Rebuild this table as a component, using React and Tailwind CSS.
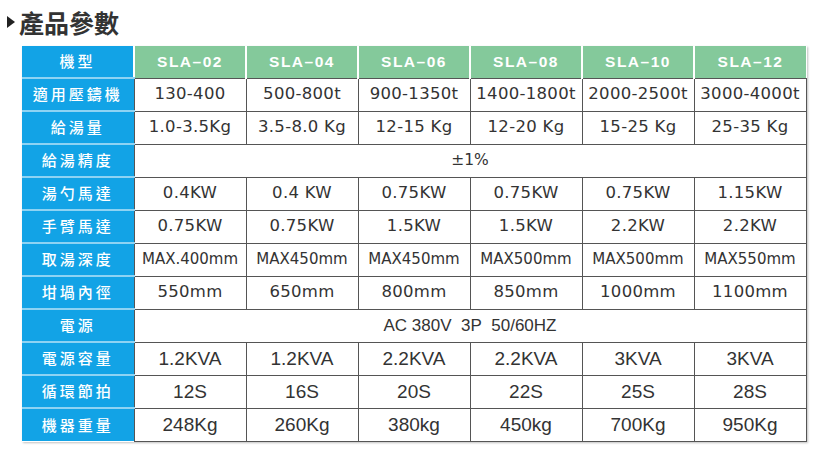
const MODELS = ["SLA-02", "SLA-04", "SLA-06", "SLA-08", "SLA-10", "SLA-12"]

// third field: text style for the row ("small" = narrow MAX row, "arial" = lower rows set in Arial-like type)
const ROWS = [
  ["適用壓鑄機", ["130-400", "500-800t", "900-1350t", "1400-1800t", "2000-2500t", "3000-4000t"]],
  ["給湯量", ["1.0-3.5Kg", "3.5-8.0 Kg", "12-15 Kg", "12-20 Kg", "15-25 Kg", "25-35 Kg"]],
  ["給湯精度", "±1%"],
  ["湯勺馬達", ["0.4KW", "0.4 KW", "0.75KW", "0.75KW", "0.75KW", "1.15KW"]],
  ["手臂馬達", ["0.75KW", "0.75KW", "1.5KW", "1.5KW", "2.2KW", "2.2KW"]],
  ["取湯深度", ["MAX.400mm", "MAX450mm", "MAX450mm", "MAX500mm", "MAX500mm", "MAX550mm"], "small"],
  ["坩堝內徑", ["550mm", "650mm", "800mm", "850mm", "1000mm", "1100mm"]],
  ["電源", "AC 380V\u00a0\u00a03P\u00a0\u00a050/60HZ", "arial"],
  ["電源容量", ["1.2KVA", "1.2KVA", "2.2KVA", "2.2KVA", "3KVA", "3KVA"], "arial"],
  ["循環節拍", ["12S", "16S", "20S", "22S", "25S", "28S"], "arial"],
  ["機器重量", ["248Kg", "260Kg", "380kg", "450kg", "700Kg", "950Kg"], "arial"],
]

const cjk = { fontFamily: '"Noto Sans CJK TC", "Noto Sans", sans-serif' }
const latin = { fontFamily: '"Liberation Sans", "Noto Sans", sans-serif' }
const data = { fontFamily: '"DejaVu Sans", "Liberation Sans", sans-serif' }

const cellClass = (kind) => {
  if (kind === "small") return "text-[15px]"
  if (kind === "arial") return "text-[19px]"
  return "text-[16.5px] tracking-[0.3px]"
}

export default function App() {
  return (
    <div className="w-[826px] h-[456px] bg-white overflow-hidden">
      <div className="flex items-center h-[42px] pl-[7px] pt-[2px]">
        <span className="w-0 h-0 border-y-[6px] border-y-transparent border-l-[8px] border-l-[#222] mr-[4px]" />
        <h1 className="text-[25px] font-bold text-[#333] leading-none" style={cjk}>產品參數</h1>
      </div>
      <div className="ml-[22px] mt-[4px] w-[785px] shadow-[1px_1px_2px_rgba(0,0,0,0.25)]">
        <table className="w-[784px] table-fixed border-collapse">
          <colgroup>
            <col className="w-[112px]" />
            {MODELS.map((m) => <col key={m} className="w-[112px]" />)}
          </colgroup>
          <thead>
            <tr className="h-[32px]">
              <th className="bg-[#12a3e6] text-white text-[15px] font-medium tracking-[3px] border-b-2 border-b-[#8ed3f3]" style={cjk}>機型</th>
              {MODELS.map((m) => (
                <th key={m} className="bg-[#84c99b] text-white text-[15.5px] font-bold tracking-[1.5px] border-l-2 border-l-white" style={latin}>{m.replace("-", "–")}</th>
              ))}
            </tr>
          </thead>
          <tbody>
            {ROWS.map(([label, values, kind], i) => (
              <tr key={label} className="h-[33px]">
                <td className={`bg-[#12a3e6] text-white text-[15px] font-medium text-center tracking-[3px] ${i < ROWS.length - 1 ? "border-b-2 border-b-[#8ed3f3]" : ""}`} style={cjk}>{label}</td>
                {Array.isArray(values) ? values.map((v, j) => (
                  <td key={j} className={`border-[1.5px] border-[#555] text-center text-[#333] whitespace-nowrap leading-none ${cellClass(kind)}`} style={kind === "arial" ? latin : data}>{v}</td>
                )) : (
                  <td colSpan={6} className={`border-[1.5px] border-[#555] text-center text-[#333] ${kind === "arial" ? "text-[17px]" : "text-[15.5px]"}`} style={kind === "arial" ? latin : data}>{values}</td>
                )}
              </tr>
            ))}
          </tbody>
        </table>
      </div>
    </div>
  )
}
